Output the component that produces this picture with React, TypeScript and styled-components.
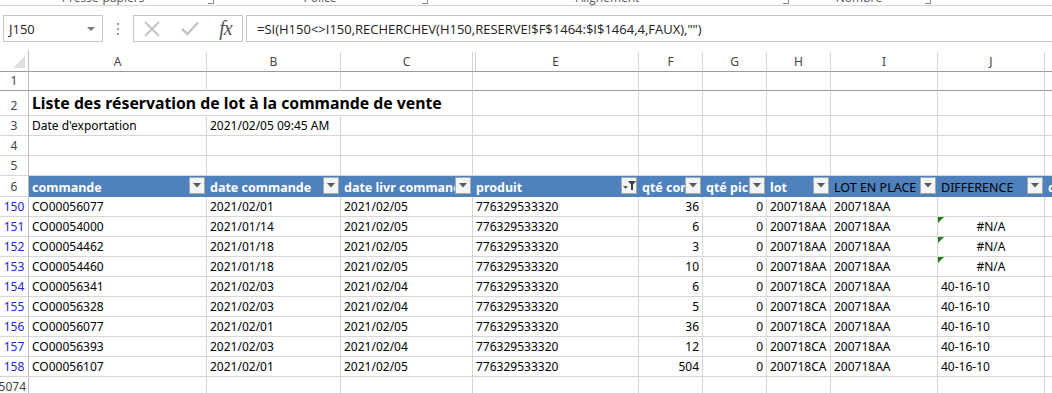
import React from 'react'
import styled, { createGlobalStyle } from 'styled-components'

const GlobalStyle = createGlobalStyle`
  html, body { margin: 0; padding: 0; background: #fff; overflow: hidden; }
  body { font-family: 'Noto Sans', 'Open Sans', sans-serif; width: 1052px; height: 393px; }
`

// column widths incl. right grid line: rowhead, A, B, C, E, F, G, H, I, J, K
const COLS = [29, 178, 134, 132, 166, 64, 64, 64, 107, 107, 60]
const LETTERS = ['A', 'B', 'C', 'E', 'F', 'G', 'H', 'I', 'J', 'K']

const GROUPS = [
  { label: 'Presse-papiers', width: 220 },
  { label: 'Police', width: 214 },
  { label: 'Alignement', width: 361 },
  { label: 'Nombre', width: 142 },
]

const HEADERS = [
  { text: 'commande' },
  { text: 'date commande' },
  { text: 'date livr commande' },
  { text: 'produit', filtered: true },
  { text: 'qté commandée' },
  { text: 'qté picking' },
  { text: 'lot' },
  { text: 'LOT EN PLACE', plain: true },
  { text: 'DIFFERENCE', plain: true },
  { text: 'date' },
]

const ROWS = [
  ['150', 'CO00056077', '2021/02/01', '2021/02/05', '776329533320', '36', '0', '200718AA', '200718AA', ''],
  ['151', 'CO00054000', '2021/01/14', '2021/02/05', '776329533320', '6', '0', '200718AA', '200718AA', '#N/A'],
  ['152', 'CO00054462', '2021/01/18', '2021/02/05', '776329533320', '3', '0', '200718AA', '200718AA', '#N/A'],
  ['153', 'CO00054460', '2021/01/18', '2021/02/05', '776329533320', '10', '0', '200718AA', '200718AA', '#N/A'],
  ['154', 'CO00056341', '2021/02/03', '2021/02/04', '776329533320', '6', '0', '200718CA', '200718AA', '40-16-10'],
  ['155', 'CO00056328', '2021/02/03', '2021/02/04', '776329533320', '5', '0', '200718CA', '200718AA', '40-16-10'],
  ['156', 'CO00056077', '2021/02/01', '2021/02/05', '776329533320', '36', '0', '200718CA', '200718AA', '40-16-10'],
  ['157', 'CO00056393', '2021/02/03', '2021/02/04', '776329533320', '12', '0', '200718CA', '200718AA', '40-16-10'],
  ['158', 'CO00056107', '2021/02/01', '2021/02/05', '776329533320', '504', '0', '200718CA', '200718AA', '40-16-10'],
]

const Page = styled.div`
  display: flex;
  flex-direction: column;
  width: 1052px;
  height: 393px;
  overflow: hidden;
  background: #fff;
  & > * {
    flex-shrink: 0;
  }
`

const Ribbon = styled.div`
  display: flex;
  height: 5px;
  overflow: hidden;
  border-bottom: 1px solid #d5d5d5;
  background: #fff;
`

const Group = styled.div<{ $w: number }>`
  position: relative;
  width: ${p => p.$w}px;
  display: flex;
  justify-content: center;
  padding-right: 14px;
  box-sizing: border-box;
  font-family: 'Open Sans', sans-serif;
  font-size: 12px;
  color: #555;
  line-height: 14px;
  margin-top: -9px;
`

const Launcher = styled.span`
  position: absolute;
  right: 6px;
  top: 6px;
  width: 5px;
  height: 6px;
  border-right: 1px solid #8a8a8a;
  border-bottom: 1px solid #8a8a8a;
`

const FormulaBar = styled.div`
  display: flex;
  align-items: stretch;
  height: 27px;
  margin: 9px 0 8px;
  padding-left: 3px;
  font-family: 'Open Sans', sans-serif;
  font-size: 13px;
  color: #222;
`

const NameBox = styled.div`
  position: relative;
  box-sizing: border-box;
  width: 100px;
  display: flex;
  align-items: center;
  padding-left: 5px;
  border: 1px solid #c6c6c6;
  background: #fff;
`

const DropArrow = styled.span`
  position: absolute;
  right: 7px;
  top: 11px;
  border-left: 4px solid transparent;
  border-right: 4px solid transparent;
  border-top: 4px solid #777;
`

const Dots = styled.div`
  width: 30px;
  display: flex;
  flex-direction: column;
  align-items: center;
  justify-content: center;
  gap: 3px;
  span {
    width: 2px;
    height: 2px;
    background: #9a9a9a;
  }
`

const FuncBox = styled.div`
  box-sizing: border-box;
  width: 110px;
  display: flex;
  align-items: center;
  justify-content: space-around;
  border: 1px solid #c6c6c6;
  background: #fff;
  margin-right: 3px;
`

const Fx = styled.span`
  font-family: 'Liberation Serif', serif;
  font-style: italic;
  font-size: 20px;
  color: #555;
  letter-spacing: -1px;
`

const FormulaInput = styled.div`
  flex: 1;
  display: flex;
  align-items: center;
  padding-left: 10px;
  border: 1px solid #c6c6c6;
  border-right: none;
  background: #fff;
  white-space: nowrap;
`

const Sheet = styled.div`
  display: grid;
  grid-template-columns: ${COLS.map(c => `${c}px`).join(' ')};
  grid-template-rows: 22px 19px 25px 20px 20px 20px 21px repeat(9, 20px) 20px;
`

const Corner = styled.div`
  position: relative;
  border-right: 1px solid #bcbcbc;
  border-bottom: 1px solid #9b9b9b;
  &::after {
    content: '';
    position: absolute;
    right: 3px;
    bottom: 3px;
    border-left: 12px solid transparent;
    border-bottom: 12px solid #dfdfdf;
  }
`

const ColHead = styled.div<{ $gap?: boolean }>`
  display: flex;
  align-items: center;
  justify-content: center;
  margin-top: 2px;
  border-right: 1px solid #d6d6d6;
  border-bottom: 1px solid #9b9b9b;
  font-size: 12px;
  color: #444;
  ${p => p.$gap && 'box-shadow: inset 2px 0 0 #fff, inset 3px 0 0 #d6d6d6;'}
`

const RowHead = styled.div<{ $blue?: boolean; $freeze?: boolean; $wide?: boolean }>`
  display: flex;
  align-items: flex-end;
  justify-content: ${p => (p.$wide ? 'flex-end' : 'center')};
  padding: 0 ${p => (p.$wide ? '2px' : '0')} 1px 0;
  overflow: hidden;
  border-right: 1px solid #bcbcbc;
  border-bottom: 1px solid ${p => (p.$freeze ? '#9b9b9b' : '#d6d6d6')};
  font-size: 12px;
  color: ${p => (p.$blue ? '#2424e0' : '#444')};
  white-space: nowrap;
`

const Cell = styled.div<{ $align?: 'left' | 'right' | 'center'; $freeze?: boolean; $span?: number }>`
  position: relative;
  display: flex;
  align-items: flex-end;
  justify-content: ${p => (p.$align === 'right' ? 'flex-end' : p.$align === 'center' ? 'center' : 'flex-start')};
  padding: 0 3px 1px;
  overflow: hidden;
  white-space: nowrap;
  border-right: 1px solid #d6d6d6;
  border-bottom: 1px solid ${p => (p.$freeze ? '#9b9b9b' : '#d6d6d6')};
  font-size: 12px;
  color: #000;
  ${p => p.$span && `grid-column: span ${p.$span};`}
`

const Title = styled(Cell)`
  font-size: 15.8px;
  font-weight: 700;
  padding-bottom: 1px;
`

const TableHead = styled.div<{ $plain?: boolean }>`
  display: flex;
  align-items: stretch;
  gap: 0;
  padding: 1px 2px 1px 3px;
  overflow: hidden;
  background: #4f81bd;
  font-size: 12.5px;
  font-weight: ${p => (p.$plain ? 400 : 700)};
  color: ${p => (p.$plain ? '#000' : '#fff')};
`

const HeadLabel = styled.span`
  flex: 1;
  min-width: 0;
  display: flex;
  align-items: flex-end;
  overflow: hidden;
  white-space: nowrap;
`

const FilterButton = styled.span`
  flex: 0 0 16px;
  height: 17px;
  box-sizing: border-box;
  display: flex;
  align-items: center;
  justify-content: center;
  background: #f4f4f4;
  border: 1px solid #a8a8a8;
`

const ErrorFlag = styled.span`
  position: absolute;
  top: 0;
  left: 0;
  border-top: 6px solid #1e7a1e;
  border-right: 6px solid transparent;
`

const Arrow = () => (
  <svg width="8" height="5" viewBox="0 0 8 5">
    <path d="M0 0 H8 L4 4.5 Z" fill="#595959" />
  </svg>
)

const Funnel = () => (
  <svg width="13" height="11" viewBox="0 0 13 11">
    <path d="M0 6 H5 L2.5 9 Z" fill="#595959" />
    <path d="M5 1 H13 L10 4.5 V10 H8 V4.5 Z" fill="#404040" />
  </svg>
)

const Cross = () => (
  <svg width="16" height="16" viewBox="0 0 16 16">
    <path d="M1 1 L15 15 M15 1 L1 15" stroke="#c3c3c3" strokeWidth="2" />
  </svg>
)

const Check = () => (
  <svg width="18" height="15" viewBox="0 0 18 15">
    <path d="M1 8 L6.5 13 L17 1.5" stroke="#c3c3c3" strokeWidth="2.4" fill="none" />
  </svg>
)

const emptyRow = (key: string, freeze = false) => (
  <React.Fragment key={key}>
    <RowHead $freeze={freeze}>{key}</RowHead>
    {LETTERS.map(l => (
      <Cell key={l} $freeze={freeze} />
    ))}
  </React.Fragment>
)

export default function App() {
  return (
    <Page>
      <GlobalStyle />
      <Ribbon>
        {GROUPS.map(g => (
          <Group key={g.label} $w={g.width}>
            {g.label}
            <Launcher />
          </Group>
        ))}
      </Ribbon>

      <FormulaBar>
        <NameBox>
          J150
          <DropArrow />
        </NameBox>
        <Dots>
          <span />
          <span />
          <span />
        </Dots>
        <FuncBox>
          <Cross />
          <Check />
          <Fx>fx</Fx>
        </FuncBox>
        <FormulaInput>=SI(H150&lt;&gt;I150,RECHERCHEV(H150,RESERVE!$F$1464:$I$1464,4,FAUX),"")</FormulaInput>
      </FormulaBar>

      <Sheet>
        <Corner />
        {LETTERS.map(l => (
          <ColHead key={l} $gap={l === 'E'}>
            {l === 'K' ? '' : l}
          </ColHead>
        ))}

        {emptyRow('1', true)}

        <RowHead>2</RowHead>
        <Title $span={3}>Liste des réservation de lot à la commande de vente</Title>
        {LETTERS.slice(3).map(l => (
          <Cell key={l} />
        ))}

        <RowHead>3</RowHead>
        <Cell>Date d'exportation</Cell>
        <Cell>2021/02/05 09:45 AM</Cell>
        {LETTERS.slice(2).map(l => (
          <Cell key={l} />
        ))}

        {emptyRow('4')}
        {emptyRow('5')}

        <RowHead>6</RowHead>
        {HEADERS.map((h, i) => (
          <TableHead key={h.text} $plain={h.plain}>
            <HeadLabel>{h.text}</HeadLabel>
            {i < 9 && <FilterButton>{h.filtered ? <Funnel /> : <Arrow />}</FilterButton>}
          </TableHead>
        ))}

        {ROWS.map(r => (
          <React.Fragment key={r[0]}>
            <RowHead $blue>{r[0]}</RowHead>
            {r.slice(1).map((v, i) => (
              <Cell key={i} $align={i === 4 || i === 5 ? 'right' : i === 8 && v === '#N/A' ? 'center' : 'left'}>
                {i === 8 && v === '#N/A' && <ErrorFlag />}
                {v}
              </Cell>
            ))}
            <Cell />
          </React.Fragment>
        ))}

        <RowHead $wide>15074</RowHead>
        {LETTERS.map(l => (
          <Cell key={l} />
        ))}
      </Sheet>
    </Page>
  )
}
